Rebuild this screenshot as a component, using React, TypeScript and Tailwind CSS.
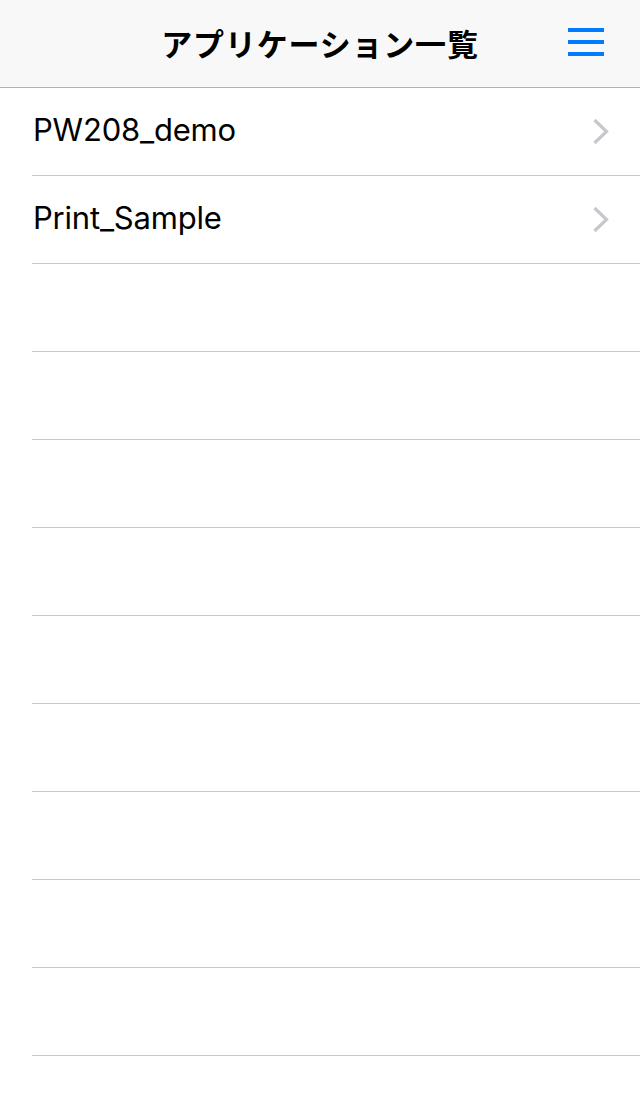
const apps = ["PW208_demo", "Print_Sample"];
const emptyRows = 9;

function Chevron() {
  return (
    <svg width="17" height="27" viewBox="0 0 17 27" fill="none">
      <path d="M2.5 2L14.5 13.5L2.5 25" stroke="#C7C7CC" strokeWidth="3.2" />
    </svg>
  );
}

export default function App() {
  const rows = [...apps, ...Array(emptyRows).fill("")];

  return (
    <div className="w-[640px] h-[1096px] bg-white overflow-hidden" style={{ fontFamily: 'Inter, "Noto Sans CJK JP", sans-serif' }}>
      {/* Nav bar */}
      <header className="relative h-[88px] bg-[#f8f8f8] border-b border-[#b2b2b2] flex items-center justify-center">
        <h1 className="text-[31px] font-bold text-black tracking-[0.8px] pb-[1px]" style={{ fontFamily: '"Noto Sans CJK JP", sans-serif' }}>
          アプリケーション一覧
        </h1>
        <button className="absolute right-[36px] top-[28px] flex flex-col gap-[8px]">
          <span className="block w-[36px] h-[4px] bg-[#007aff]" />
          <span className="block w-[36px] h-[4px] bg-[#007aff]" />
          <span className="block w-[36px] h-[4px] bg-[#007aff]" />
        </button>
      </header>

      {/* List */}
      <ul className="pl-[32px]">
        {rows.map((name, i) => (
          <li key={i} className="h-[88px] border-b border-[#c8c7cc] flex items-center justify-between pr-[31px]">
            <span className="text-[31px] tracking-[-0.2px] text-black pl-px pb-[2px]">{name}</span>
            {name && <Chevron />}
          </li>
        ))}
      </ul>
    </div>
  );
}
